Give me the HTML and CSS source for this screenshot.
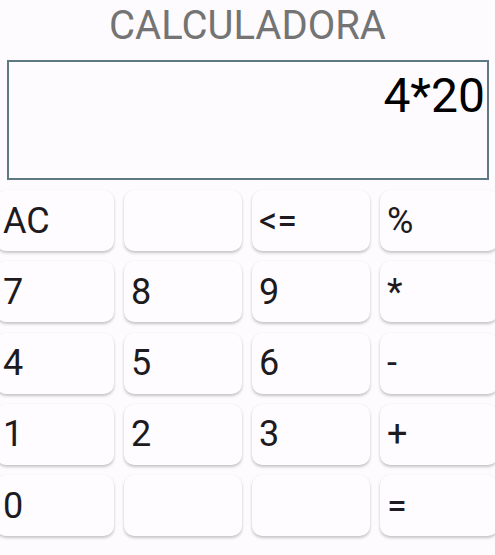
FILE: index.html
```html
<!DOCTYPE html>
<html lang="es">
<head>
<meta charset="utf-8">
<title>Calculadora</title>
<link rel="stylesheet" href="styles.css">
</head>
<body>
<div class="app">
  <h1 class="title">CALCULADORA</h1>
  <div class="display">4*20</div>
  <div class="keys">
    <button class="key">AC</button>
    <button class="key"></button>
    <button class="key">&lt;=</button>
    <button class="key">%</button>
    <button class="key">7</button>
    <button class="key">8</button>
    <button class="key">9</button>
    <button class="key">*</button>
    <button class="key">4</button>
    <button class="key">5</button>
    <button class="key">6</button>
    <button class="key">-</button>
    <button class="key">1</button>
    <button class="key">2</button>
    <button class="key">3</button>
    <button class="key">+</button>
    <button class="key">0</button>
    <button class="key"></button>
    <button class="key"></button>
    <button class="key">=</button>
  </div>
</div>
</body>
</html>
```
FILE: styles.css
```css
html, body {
  margin: 0;
  padding: 0;
  background: #fefbfe;
  overflow: hidden;
}
body {
  font-family: Roboto, "Liberation Sans", sans-serif;
  width: 495px;
  height: 555px;
}
.app {
  display: flex;
  flex-direction: column;
}
.title {
  margin: 0;
  padding-top: 2px;
  height: 48px;
  line-height: 48px;
  font-size: 40px;
  font-weight: 400;
  text-align: center;
  color: #747474;
}
.display {
  margin: 10px 0 0 7px;
  width: 476px;
  height: 110px;
  border: 2px solid #5e7884;
  padding: 6px 2px 0 0;
  font-size: 48px;
  line-height: 56px;
  text-align: right;
  color: #000;
}
.keys {
  margin: 10px 0 0 -4px;
  display: grid;
  grid-template-columns: repeat(4, 118px);
  grid-auto-rows: 61px;
  column-gap: 10px;
  row-gap: 10.25px;
}
.key {
  margin: 0;
  border: none;
  border-radius: 10px;
  background: #fffcff;
  box-shadow: 0 2px 3px rgba(0, 0, 0, 0.22), 0 0 1px rgba(0, 0, 0, 0.08);
  font-family: Roboto, "Liberation Sans", sans-serif;
  font-size: 36px;
  color: #1d1b20;
  text-align: left;
  padding: 0 0 0 7px;
  display: flex;
  align-items: center;
}
```
